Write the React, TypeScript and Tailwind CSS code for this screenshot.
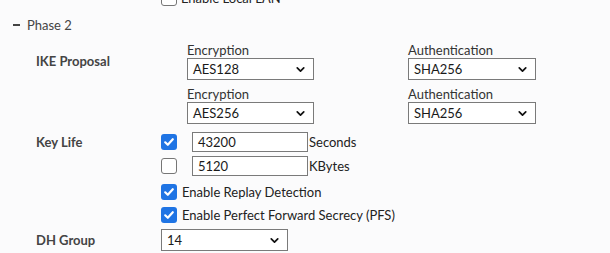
import React from 'react';
import { ChevronDown } from 'lucide-react';

const Check: React.FC<{ checked?: boolean }> = ({ checked }) =>
  checked ? (
    <span className="w-4 h-4 shrink-0 rounded-[3px] bg-[#1f74e4] flex items-center justify-center">
      <svg width="12" height="12" viewBox="0 0 12 12" fill="none">
        <path d="M2.2 6.3 L4.8 8.8 L9.8 3.2" stroke="white" strokeWidth="2.2" strokeLinecap="round" strokeLinejoin="round" />
      </svg>
    </span>
  ) : (
    <span className="w-4 h-4 shrink-0 rounded-[3px] border border-[#767676] bg-white" />
  );

const Select: React.FC<{ value: string; w?: string }> = ({ value, w = 'w-[127px]' }) => (
  <div className={`${w} h-[22px] border border-[#7a7a7a] bg-white flex items-center justify-between pl-[5px] pr-[6px] text-[13px] text-[#1a1a1a]`}>
    <span>{value}</span>
    <ChevronDown size={13} strokeWidth={3.2} className="text-[#111]" />
  </div>
);

const Field: React.FC<{ label: string; value: string }> = ({ label, value }) => (
  <div className="flex flex-col">
    <span className="h-4 leading-4 text-[13px] text-[#333]">{label}</span>
    <Select value={value} />
  </div>
);

export default function App() {
  return (
    <div
      className="w-[610px] h-[253px] overflow-hidden bg-[#fbfbfc] text-[13px] leading-4 text-[#333]"
      style={{ fontFamily: 'Lato, "Open Sans", sans-serif' }}
    >
      {/* Enable Local LAN (cut off at top) */}
      <div className="-mt-[10px] ml-[161px] h-4 flex items-center gap-[4px]">
        <Check />
        <span className="text-[#222]">Enable Local LAN</span>
      </div>

      {/* Phase 2 header */}
      <div className="mt-[11px] ml-[13px] flex items-center gap-[7px]">
        <span className="w-[7px] h-[2px] bg-[#444]" />
        <span className="text-[#444]">Phase 2</span>
      </div>

      {/* IKE Proposal */}
      <div className="mt-[9px] flex">
        <div className="w-[187px] pl-[36px] pt-[11px] font-bold text-[#444]">IKE Proposal</div>
        <div className="grid grid-cols-[221px_auto] gap-y-[6px]">
          <Field label="Encryption" value="AES128" />
          <div className="flex flex-col">
            <span className="h-4 leading-4 text-[#333]">Authentication</span>
            <Select value="SHA256" w="w-[128px]" />
          </div>
          <Field label="Encryption" value="AES256" />
          <div className="flex flex-col">
            <span className="h-4 leading-4 text-[#333]">Authentication</span>
            <Select value="SHA256" w="w-[128px]" />
          </div>
        </div>
      </div>

      {/* Key Life */}
      <div className="mt-[8px] flex items-center h-5">
        <div className="w-[161px] pl-[36px] font-bold text-[#444]">Key Life</div>
        <Check checked />
        <div className="ml-[15px] w-[116px] h-5 border border-[#7a7a7a] bg-white pl-[5px] flex items-center text-[#1a1a1a]">43200</div>
        <span className="ml-px text-[#222]">Seconds</span>
      </div>
      <div className="mt-[4px] flex items-center h-5">
        <div className="w-[161px]" />
        <Check />
        <div className="ml-[15px] w-[116px] h-5 border border-[#7a7a7a] bg-white pl-[5px] flex items-center text-[#1a1a1a]">5120</div>
        <span className="ml-px text-[#222]">KBytes</span>
      </div>

      {/* Options */}
      <div className="mt-[8px] ml-[161px] h-4 flex items-center gap-[5px]">
        <Check checked />
        <span className="text-[#222]">Enable Replay Detection</span>
      </div>
      <div className="mt-[7px] ml-[161px] h-4 flex items-center gap-[5px]">
        <Check checked />
        <span className="text-[#222]">Enable Perfect Forward Secrecy (PFS)</span>
      </div>

      {/* DH Group */}
      <div className="mt-[6px] flex items-center">
        <div className="w-[161px] pl-[36px] font-bold text-[#444]">DH Group</div>
        <Select value="14" />
      </div>
    </div>
  );
}
